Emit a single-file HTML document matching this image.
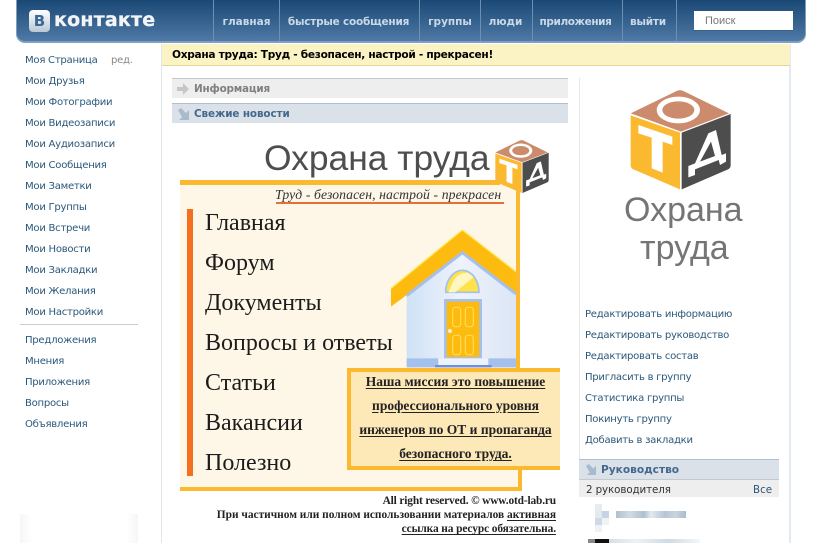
<!DOCTYPE html>
<html lang="ru"><head><meta charset="utf-8"><title>Охрана труда</title>
<style>
html,body{margin:0;padding:0;background:#fff;width:823px;height:543px;overflow:hidden}
body{position:relative;font-family:"DejaVu Sans","Liberation Sans",sans-serif;font-size:10px;color:#2b587a}
.a{position:absolute;white-space:nowrap}
.nav{position:absolute;top:0;height:41px;line-height:44px;color:#c9d9e8;font-weight:bold;font-size:10.5px;text-align:center;border-left:1px solid #6d8fb0;box-sizing:border-box}
.m{position:absolute;left:25px;white-space:nowrap;font-size:10.1px;line-height:14px;color:#2b587a;letter-spacing:-.28px}
.s{font-family:"Liberation Serif",serif;color:#1c1c1c;font-size:24px;position:absolute;left:205px;white-space:nowrap;line-height:26px}
.r{position:absolute;left:585px;font-size:10.1px;line-height:14px;white-space:nowrap;color:#2b587a;letter-spacing:-.28px}
.mis{position:absolute;left:351px;width:209px;text-align:center;font-family:"Liberation Serif",serif;font-weight:bold;font-size:13.5px;line-height:14px;color:#222;white-space:nowrap}
.mis u,.ft u{text-underline-offset:2px}
.ft{position:absolute;right:267px;font-family:"Liberation Serif",serif;font-weight:bold;font-size:11.4px;line-height:13px;color:#222;white-space:nowrap}
</style></head><body>

<!-- header -->
<div class="a" style="left:16px;top:0;width:790px;height:43px;box-sizing:border-box;background:linear-gradient(#1a4874,#4f79a6);border:solid #7f9fbf;border-width:0 1px 2px 1px;border-radius:0 0 9px 9px"></div>
<div class="a" style="left:29px;top:10px;width:21px;height:22px;border-radius:4px;background:linear-gradient(#fff,#b9c7d5);color:#3b6798;font-weight:bold;font-size:15px;line-height:22px;text-align:center">В</div>
<div class="a" style="left:54px;top:8px;font-weight:bold;font-size:19px;line-height:25px;color:#f2f5f8;letter-spacing:.2px;-webkit-text-stroke:.3px #f2f5f8">контакте</div>
<div class="nav" style="left:213px;width:66px">главная</div>
<div class="nav" style="left:279px;width:138px;letter-spacing:-.22px">быстрые сообщения</div>
<div class="nav" style="left:419px;width:61px">группы</div>
<div class="nav" style="left:480px;width:50px">люди</div>
<div class="nav" style="left:532px;width:86px;letter-spacing:-.4px">приложения</div>
<div class="nav" style="left:622px;width:55px;border-right:1px solid #6d8fb0;padding-right:3px;letter-spacing:-.2px">выйти</div>
<div class="a" style="left:694px;top:11px;width:99px;height:20px;background:#fff;border-bottom:1px solid #35618c;box-sizing:border-box;color:#777;line-height:21px;padding-left:11px;font-family:'Liberation Sans',sans-serif;font-size:11px">Поиск</div>

<!-- left menu -->
<div class="m" style="top:54px">Моя Страница</div><div class="m" style="top:54px;left:111px;color:#888">ред.</div>
<div class="m" style="top:75px">Мои Друзья</div>
<div class="m" style="top:96px">Мои Фотографии</div>
<div class="m" style="top:117px">Мои Видеозаписи</div>
<div class="m" style="top:138px">Мои Аудиозаписи</div>
<div class="m" style="top:159px">Мои Сообщения</div>
<div class="m" style="top:180px">Мои Заметки</div>
<div class="m" style="top:201px">Мои Группы</div>
<div class="m" style="top:222px">Мои Встречи</div>
<div class="m" style="top:243px">Мои Новости</div>
<div class="m" style="top:264px">Мои Закладки</div>
<div class="m" style="top:285px">Мои Желания</div>
<div class="m" style="top:306px">Мои Настройки</div>
<div class="a" style="left:20px;top:324px;width:118px;height:1px;background:#ccc"></div>
<div class="m" style="top:334px">Предложения</div>
<div class="m" style="top:355px">Мнения</div>
<div class="m" style="top:376px">Приложения</div>
<div class="m" style="top:397px">Вопросы</div>
<div class="m" style="top:418px">Объявления</div>
<div class="a" style="left:20px;top:514px;width:118px;height:29px;background:linear-gradient(90deg,#f6f6f6,#fff 10%,#fff 90%,#f6f6f6)"></div>

<!-- page frame -->
<div class="a" style="left:161px;top:44px;width:1px;height:499px;background:#dfe6ee"></div>
<div class="a" style="left:789px;top:44px;width:2px;height:499px;background:#e4eaf1"></div>
<div class="a" style="left:162px;top:44px;width:628px;height:22px;box-sizing:border-box;background:#fbf3c3;border-bottom:1px solid #e3d89c;font-weight:bold;font-size:10.6px;line-height:22px;color:#000;padding-left:10px;letter-spacing:-.3px">Охрана труда: Труд - безопасен, настрой - прекрасен!</div>
<div class="a" style="left:579px;top:78px;width:1px;height:382px;background:#e6e6e6"></div>

<!-- section headers -->
<div class="a" style="left:172px;top:78px;width:396px;height:20px;box-sizing:border-box;background:#eee;border-top:1px solid #c3c6ca;color:#808080;font-weight:bold;font-size:10.4px;line-height:21px;padding-left:22px;letter-spacing:-.2px">Информация</div>
<svg class="a" style="left:177px;top:82px" width="13" height="14"><path d="M0 5H6V1L12 7L6 13V9H0Z" fill="#c6c6c6"/></svg>
<div class="a" style="left:172px;top:103px;width:396px;height:20px;box-sizing:border-box;background:#dae1e8;border-top:1px solid #b0bfd2;color:#45688e;font-weight:bold;font-size:10.4px;line-height:21px;padding-left:22px;letter-spacing:-.1px">Свежие новости</div>
<svg class="a" style="left:178px;top:108px" width="12" height="13"><path d="M0 2L3 0L8 5L11 2V12H1L4 9Z" fill="#a9bacd"/></svg>

<!-- banner -->
<div class="a" style="left:180px;top:180px;width:320px;height:5px;background:#fbb92f"></div>
<div class="a" style="left:180px;top:185px;width:336px;height:302px;background:#fef7e7"></div>
<div class="a" style="left:516px;top:470px;width:2px;height:17px;background:#fef7e7"></div>
<div class="a" style="left:516px;top:190px;width:4px;height:178px;background:#fbb92f"></div>
<div class="a" style="left:518px;top:470px;width:4px;height:21px;background:#fbb92f"></div>
<div class="a" style="left:180px;top:487px;width:342px;height:4px;background:#fbb92f"></div>
<div class="a" style="left:264px;top:137px;font-family:'Liberation Sans',sans-serif;font-size:35.4px;line-height:42px;color:#4e4e4e">Охрана труда</div>

<svg class="a" style="left:495px;top:140px" width="54" height="53" viewBox="152 30 300 298">
<g id="cube">
<path d="M152 100L290 33Q300 28 310 33L447 100L303 155Z" fill="#cb8b6c"/>
<path d="M152 106L300 158V328L160 268Q152 264 152 256Z" fill="#fbb92f"/>
<path d="M305 158L452 102V256Q452 264 444 268L305 328Z" fill="#4d4d4d"/>
<ellipse cx="295" cy="90" rx="65" ry="40" fill="#fff"/><ellipse cx="295" cy="90" rx="48" ry="26" fill="#cb8b6c"/>
<path d="M175 135L277 170V195L248 185V278L215 265V173L175 160Z" fill="#fff"/>
<path d="M325 258L345 250L385 160L408 150L425 225L438 220V245L420 255L416 240L345 268V285L325 292Z" fill="#fff"/>
<path d="M360 245L405 228L393 185Z" fill="#4d4d4d"/>
</g></svg>

<div class="a" style="left:275px;top:186px;font-family:'Liberation Serif',serif;font-style:italic;font-size:13.7px;line-height:17px;color:#333;letter-spacing:.1px">Труд - безопасен, настрой - прекрасен</div>
<div class="a" style="left:276px;top:202px;width:228px;height:2px;background:#e2703a"></div>
<div class="a" style="left:187px;top:209px;width:6px;height:267px;background:#f46f1f"></div>
<div class="s" style="top:210px">Главная</div>
<div class="s" style="top:250px">Форум</div>
<div class="s" style="top:290px">Документы</div>
<div class="s" style="top:330px">Вопросы и ответы</div>
<div class="s" style="top:370px">Статьи</div>
<div class="s" style="top:410px">Вакансии</div>
<div class="s" style="top:450px">Полезно</div>

<!-- house -->
<svg class="a" style="left:380px;top:230px" width="190" height="150" viewBox="0 0 570 450">
<defs><linearGradient id="w" x1="0" x2="1" y1="0" y2="0"><stop offset="0" stop-color="#cfe2f6"/><stop offset=".5" stop-color="#eef2fb"/><stop offset="1" stop-color="#dbe6f6"/></linearGradient>
<clipPath id="hc"><rect x="0" y="0" width="408" height="450"/></clipPath></defs>
<g clip-path="url(#hc)">
<path d="M80 195L247 65L408 190V412H80Z" fill="url(#w)"/>
<path d="M80 385H408V412H80Z" fill="#a5c0ec"/>
<path d="M33 175L247 0L408 125V190L247 65L80 195L33 230Z" fill="#fdbb10"/>
<path d="M33 175L247 0L408 125" fill="none" stroke="#ffe95e" stroke-width="4"/>
<path d="M80 197L247 68L408 192" fill="none" stroke="#a5c0ec" stroke-width="9"/>
<path d="M197 187A50 66 0 0 1 297 187Z" fill="#fde24a" stroke="#a5c0ec" stroke-width="5"/>
<path d="M215 165Q225 130 262 128Q275 135 280 142L225 187H205Z" fill="#fff6c0"/>
<rect x="196" y="211" width="106" height="174" fill="#fdbb10" stroke="#a5c0ec" stroke-width="8"/>
<g fill="none" stroke="#ffdd55" stroke-width="3.500"><rect x="218" y="232" width="24" height="58" rx="8"/><rect x="256" y="232" width="24" height="58" rx="8"/><rect x="218" y="316" width="24" height="58" rx="8"/><rect x="256" y="316" width="24" height="58" rx="8"/></g>
<circle cx="210" cy="303" r="6" fill="#f3eedd"/>
<rect x="175" y="385" width="150" height="20" fill="#eef2fb"/><rect x="165" y="405" width="170" height="7" fill="#6f8fdc"/>
</g></svg>

<!-- mission -->
<div class="a" style="left:347px;top:368px;width:213px;height:102px;box-sizing:border-box;background:#fde8b8;border:solid #fbb92f;border-width:4px 0 4px 4px"></div>
<div class="mis" style="top:375px"><u>Наша миссия это повышение</u></div>
<div class="mis" style="top:399px"><u>профессионального уровня</u></div>
<div class="mis" style="top:423px"><u>инженеров по ОТ и пропаганда</u></div>
<div class="mis" style="top:447px"><u>безопасного труда.</u></div>

<div class="ft" style="top:495px;letter-spacing:-.15px">All right reserved. © www.otd-lab.ru</div>
<div class="ft" style="top:509px">При частичном или полном использовании материалов <u>активная</u></div>
<div class="ft" style="top:523px;letter-spacing:-.1px"><u>ссылка на ресурс обязательна.</u></div>

<!-- right logo -->
<svg class="a" style="left:580px;top:80px" width="220" height="220" viewBox="0 0 660 660"><use href="#cube"/></svg>
<div class="a" style="left:624px;top:190px;font-family:'Liberation Sans',sans-serif;font-size:34px;line-height:40px;color:#757575">Охрана</div>
<div class="a" style="left:640px;top:228px;font-family:'Liberation Sans',sans-serif;font-size:34px;line-height:40px;color:#757575">труда</div>

<!-- right links -->
<div class="r" style="top:308px">Редактировать информацию</div>
<div class="r" style="top:329px">Редактировать руководство</div>
<div class="r" style="top:350px">Редактировать состав</div>
<div class="r" style="top:371px">Пригласить в группу</div>
<div class="r" style="top:392px">Статистика группы</div>
<div class="r" style="top:413px">Покинуть группу</div>
<div class="r" style="top:434px">Добавить в закладки</div>

<div class="a" style="left:579px;top:459px;width:200px;height:21px;box-sizing:border-box;background:#dae1e8;border-top:1px solid #b0bfd2;border-bottom:1px solid #c3c9d0;color:#45688e;font-weight:bold;font-size:10.6px;line-height:21px;padding-left:22px">Руководство</div>
<svg class="a" style="left:586px;top:464px" width="11" height="12" viewBox="0 0 12 13"><path d="M0 2L3 0L8 5L11 2V12H1L4 9Z" fill="#a9bacd"/></svg>
<div class="a" style="left:579px;top:480px;width:200px;height:17px;background:#eee;color:#333;font-size:10.3px;line-height:20px;padding-left:7px;box-sizing:border-box;letter-spacing:-.1px">2 руководителя</div>
<div class="a" style="left:753px;top:480px;color:#2b587a;font-size:10.3px;line-height:20px">Все</div>

<!-- pixelated blurred entries -->
<div class="a" style="left:595px;top:504px;width:7px;height:7px;background:#e8ecf1"></div>
<div class="a" style="left:595px;top:511px;width:7px;height:7px;background:#e4e9f0"></div>
<div class="a" style="left:602px;top:511px;width:7px;height:7px;background:#c8d2e2"></div>
<div class="a" style="left:595px;top:518px;width:7px;height:7px;background:#cdd9e6"></div>
<div class="a" style="left:602px;top:518px;width:7px;height:7px;background:#f0f3f6"></div>
<div class="a" style="left:595px;top:525px;width:7px;height:7px;background:#eef1f5"></div>
<div class="a" style="left:616px;top:511px;width:70px;height:7px;background:linear-gradient(90deg,#adc0d0,#d0dbe4 20%,#aec0cf 40%,#e3e9ef 50%,#b5c5d3 70%,#c8d4df 85%,#a8bccd)"></div>
<div class="a" style="left:588px;top:539px;width:7px;height:4px;background:#888"></div>
<div class="a" style="left:595px;top:539px;width:14px;height:4px;background:#111"></div>
<div class="a" style="left:609px;top:539px;width:91px;height:4px;background:linear-gradient(90deg,#d5dfe8,#eef2f5 30%,#cfdbe5 65%,#f4f6f8)"></div>
</body></html>
